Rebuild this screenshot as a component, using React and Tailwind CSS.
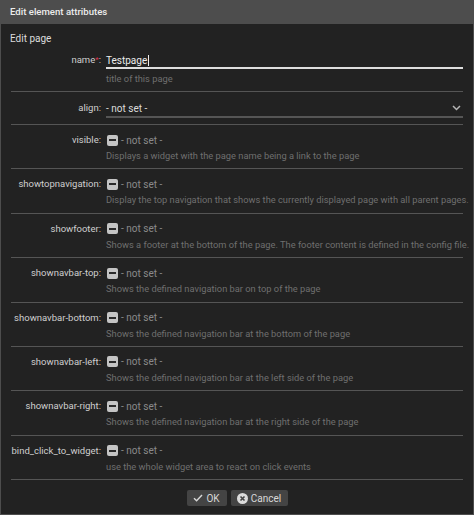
import React from "react";

const rows = [
  { label: "visible:", hint: "Displays a widget with the page name being a link to the page" },
  { label: "showtopnavigation:", hint: "Display the top navigation that shows the currently displayed page with all parent pages." },
  { label: "showfooter:", hint: "Shows a footer at the bottom of the page. The footer content is defined in the config file." },
  { label: "shownavbar-top:", hint: "Shows the defined navigation bar on top of the page" },
  { label: "shownavbar-bottom:", hint: "Shows the defined navigation bar at the bottom of the page" },
  { label: "shownavbar-left:", hint: "Shows the defined navigation bar at the left side of the page" },
  { label: "shownavbar-right:", hint: "Shows the defined navigation bar at the right side of the page" },
  { label: "bind_click_to_widget:", hint: "use the whole widget area to react on click events" },
];

function TriCheck() {
  return (
    <span className="flex h-[11px] w-[11px] shrink-0 items-center justify-center rounded-[2px] bg-[#c4c4c4]">
      <span className="h-[2px] w-[7px] bg-[#2a2a2a]" />
    </span>
  );
}

export default function App() {
  return (
    <div
      className="flex h-[515px] w-[474px] flex-col border-x border-b border-[#4d4d4d] bg-[#222222] text-[10px] text-[#cfcfcf]"
      style={{ fontFamily: "Roboto, 'Liberation Sans', sans-serif" }}
    >
      <div className="flex h-[24px] shrink-0 items-center bg-[#4d4d4d] pl-[9px] text-[9.6px] font-medium text-[#ececec]">
        Edit element attributes
      </div>

      <div className="flex flex-col px-[9px]">
        <div className="flex h-[29px] items-center text-[#dcdcdc]">Edit page</div>

        <div className="mx-[1px] flex flex-col">
          {/* name */}
          <div className="flex border-b border-[#555] pb-[2px]">
            <div className="w-[90px] shrink-0 whitespace-nowrap text-right text-[9.5px] leading-[14px]">
              name<span className="align-top text-[8px] text-[#d8344f]">*</span>:
            </div>
            <div className="ml-[5px] flex flex-1 flex-col">
              <div className="flex h-[16px] items-center border-b-2 border-[#dedede] text-[#ececec]">
                Testpage<span className="ml-[1px] h-[11px] w-px bg-[#ececec]" />
              </div>
              <div className="flex h-[20px] items-center text-[9.3px] text-[#6f6f6f]">title of this page</div>
            </div>
          </div>

          {/* align */}
          <div className="flex border-b border-[#555] pt-[8px] pb-[6px]">
            <div className="w-[90px] shrink-0 whitespace-nowrap text-right text-[9.5px] leading-[16px]">align:</div>
            <div className="ml-[5px] flex h-[18px] flex-1 items-center justify-between border-b-2 border-[#555] text-[#dcdcdc]">
              <span>- not set -</span>
              <svg width="9" height="6" viewBox="0 0 9 6" className="mr-[2px]">
                <path d="M1 1 L4.5 4.5 L8 1" fill="none" stroke="#b5b5b5" strokeWidth="1.5" />
              </svg>
            </div>
          </div>

          {rows.map((r) => (
            <div key={r.label} className="flex border-b border-[#555] pt-[7px] pb-[4.4px]">
              <div className="w-[90px] shrink-0 whitespace-nowrap text-right text-[9.5px] leading-[16px]">{r.label}</div>
              <div className="ml-[5px] flex flex-1 flex-col">
                <div className="flex h-[16px] items-center gap-[3px] pl-[1px]">
                  <TriCheck />
                  <span className="text-[#8a8a8a]">- not set -</span>
                </div>
                <div className="flex h-[16px] items-center whitespace-nowrap text-[9.3px] text-[#6f6f6f]">{r.hint}</div>
              </div>
            </div>
          ))}
        </div>

        <div className="flex justify-center gap-[4px] pt-[10px]">
          <button className="flex h-[16px] w-[40px] items-center justify-center gap-[3px] rounded-[2px] bg-[#444] text-[10px] text-[#d8d8d8]">
            <svg width="10" height="8" viewBox="0 0 10 8">
              <path d="M1 4.2 L3.6 6.8 L9 1" fill="none" stroke="#d8d8d8" strokeWidth="1.4" />
            </svg>
            OK
          </button>
          <button className="flex h-[16px] w-[57px] items-center justify-center gap-[3px] rounded-[2px] bg-[#444] text-[10px] text-[#d8d8d8]">
            <svg width="11" height="11" viewBox="0 0 11 11">
              <circle cx="5.5" cy="5.5" r="5.5" fill="#dcdcdc" />
              <path d="M3.5 3.5 L7.5 7.5 M7.5 3.5 L3.5 7.5" stroke="#444" strokeWidth="1.6" />
            </svg>
            Cancel
          </button>
        </div>
      </div>
    </div>
  );
}
